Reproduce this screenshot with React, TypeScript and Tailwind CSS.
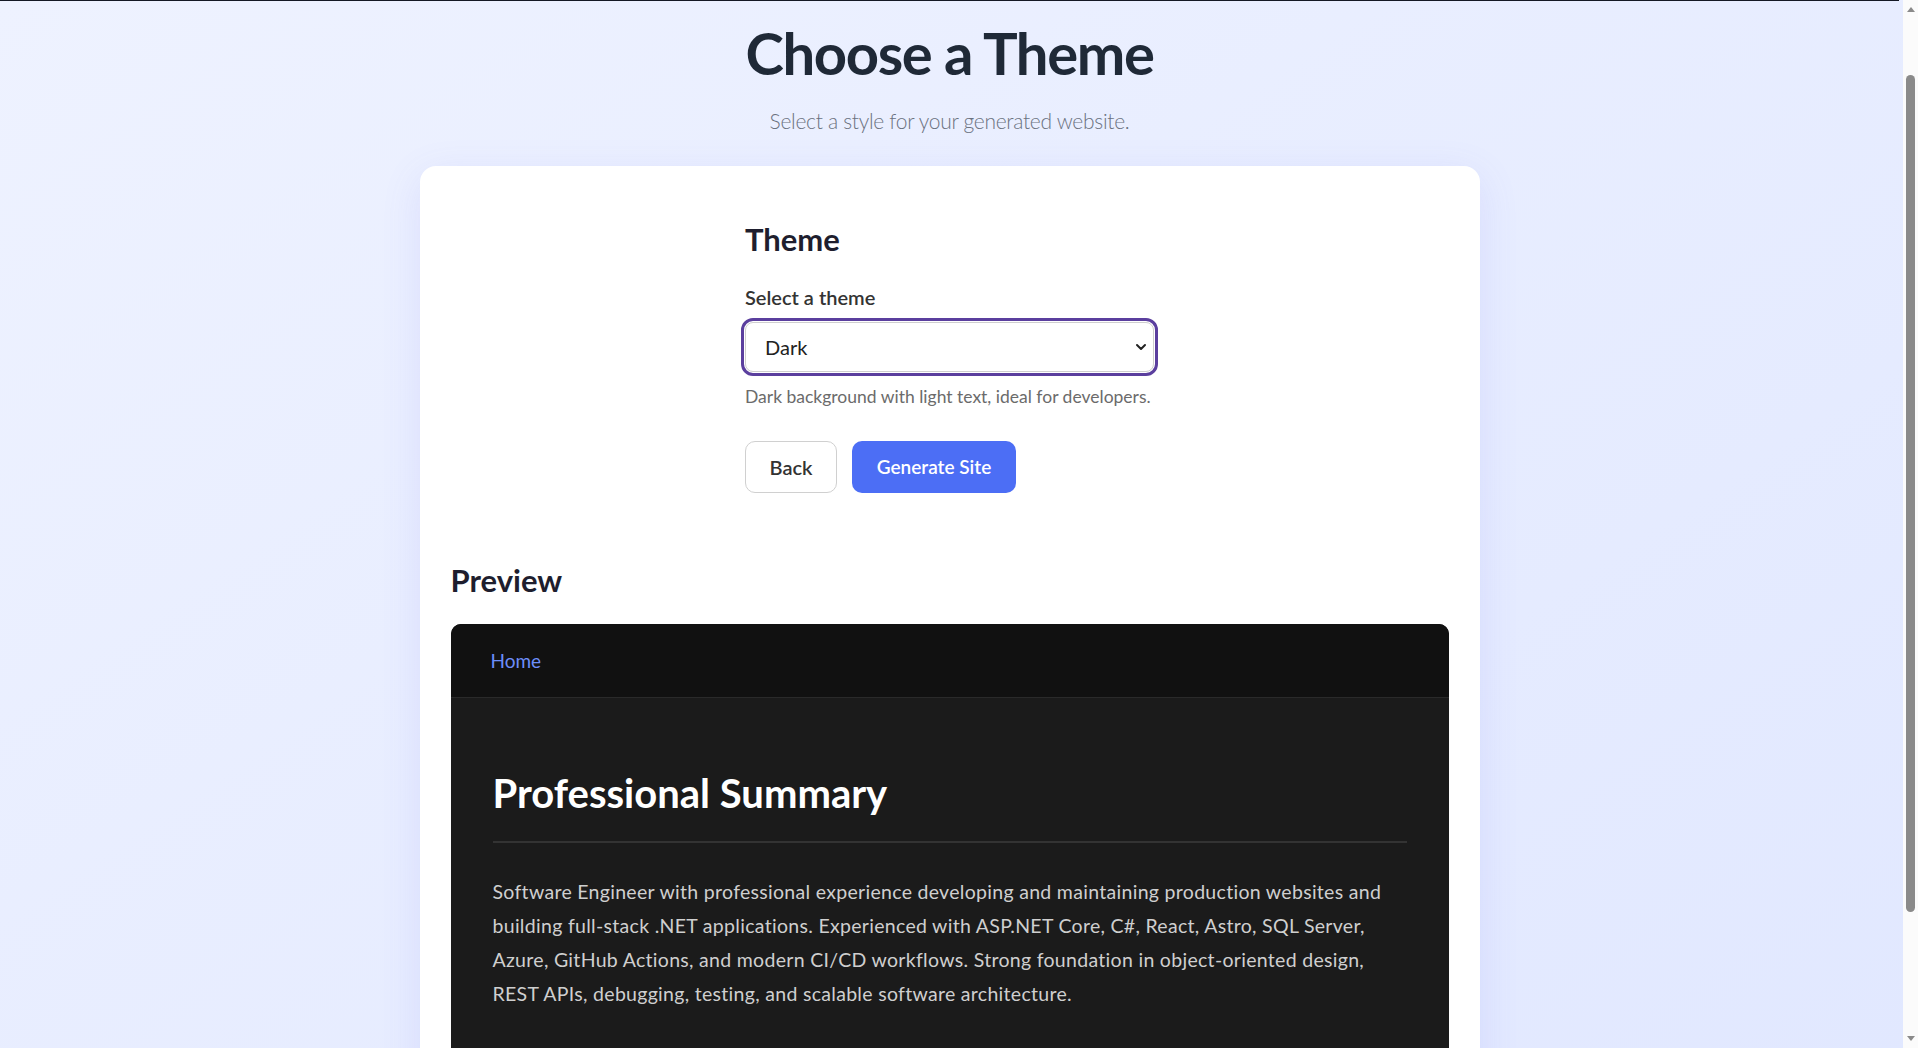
import { ChevronDown } from "lucide-react";

export default function App() {
  return (
    <div className="min-h-screen bg-linear-to-br from-[#eef2ff] to-[#e0e7ff] pr-[19px] pb-[160px] font-['Lato',sans-serif]">
      <div className="h-px bg-[#141824]" />
      <header className="text-center">
        <h1 className="mt-[16px] text-[58px] leading-[72px] font-bold tracking-[-1.4px] text-[#1f2937]">
          Choose a Theme
        </h1>
        <p className="mt-[15px] text-[21px] leading-[33px] font-light tracking-[-0.3px] text-[#6b7280]">
          Select a style for your generated website.
        </p>
      </header>

      <main className="mx-auto mt-[29px] w-[1060px] rounded-2xl bg-white px-[31px] py-[30px] shadow-[0_10px_40px_rgba(99,102,241,0.12)]">
        <section className="mx-auto w-[409px] pt-[25px]">
          <h2 className="text-[31px] leading-[36px] font-bold text-[#1e1e2e]">Theme</h2>
          <label className="mt-[28px] block text-[20px] leading-[24px] font-semibold text-[#333]">
            Select a theme
          </label>
          <div className="relative mt-[13px]">
            <select
              defaultValue="dark"
              className="h-[50px] w-full appearance-none rounded-lg border border-[#cfcfcf] bg-white pl-[19px] text-[20px] text-[#222] outline-[3px] outline-offset-1 outline-[#5b3f9e] outline-solid"
            >
              <option value="light">Light</option>
              <option value="dark">Dark</option>
            </select>
            <ChevronDown
              size={16}
              strokeWidth={3}
              className="pointer-events-none absolute top-1/2 right-[5px] -translate-y-1/2 text-[#222]"
            />
          </div>
          <p className="mt-[13px] text-[17.5px] leading-[24px] whitespace-nowrap text-[#6b6b6b]">
            Dark background with light text, ideal for developers.
          </p>
          <div className="mt-[32px] flex gap-[15px]">
            <button className="h-[52px] w-[92px] rounded-[10px] border border-[#d0d0d0] bg-white text-[20px] font-semibold text-[#333]">
              Back
            </button>
            <button className="h-[52px] w-[164px] rounded-[10px] bg-[#4c6ef5] text-[19px] font-semibold text-white">
              Generate Site
            </button>
          </div>
        </section>

        <h2 className="mt-[69px] text-[31px] leading-[36px] font-bold text-[#1e1e2e]">Preview</h2>
        <div className="mt-[26px] overflow-hidden rounded-[10px] bg-[#1b1b1b]">
          <nav className="flex h-[74px] items-center border-b border-[#2a2a2a] bg-[#111111] px-[40px]">
            <a className="text-[19px] leading-[24px] text-[#6d8ef9]">Home</a>
          </nav>
          <div className="px-[42px] pt-[71px] pb-[70px]">
            <h2 className="border-b-2 border-[#333] pb-[24px] text-[40px] leading-[48px] font-bold text-white">
              Professional Summary
            </h2>
            <p className="mt-[32px] text-[19.5px] leading-[34px] tracking-[0.3px] text-[#cfcfcf]">
              Software Engineer with professional experience developing and maintaining production websites and
              <br />
              building full-stack .NET applications. Experienced with ASP.NET Core, C#, React, Astro, SQL Server,
              <br />
              Azure, GitHub Actions, and modern CI/CD workflows. Strong foundation in object-oriented design,
              <br />
              REST APIs, debugging, testing, and scalable software architecture.
            </p>
          </div>
        </div>
      </main>

      {/* browser scrollbar */}
      <div className="fixed top-0 right-0 flex h-screen w-[15px] flex-col items-center bg-[#fbfbfb]">
        <div className="mt-[7px] h-0 w-0 border-x-[4px] border-b-[5px] border-x-transparent border-b-[#8a8a8a]" />
        <div className="mt-[63px] h-[837px] w-[9px] rounded-full bg-[#8a8a8a]" />
        <div className="mt-auto mb-[7px] h-0 w-0 border-x-[4px] border-t-[5px] border-x-transparent border-t-[#8a8a8a]" />
      </div>
    </div>
  );
}
